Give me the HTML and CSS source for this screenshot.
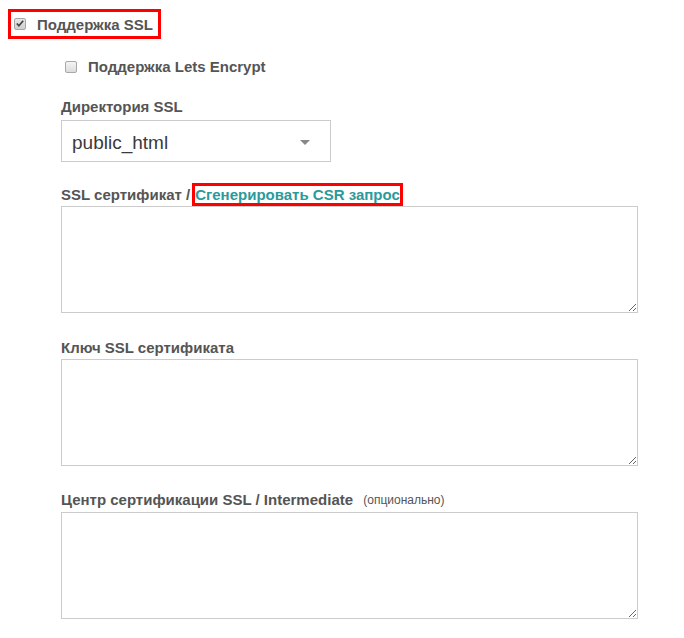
FILE: index.html
```html
<!DOCTYPE html>
<html>
<head>
<meta charset="utf-8">
<link rel="stylesheet" href="styles.css">
</head>
<body>
<div class="form">
  <div class="hl-box main-check">
    <span class="cb cb-checked"><svg width="11" height="11" viewBox="0 0 11 11"><path d="M2 5.5 L4.3 8 L9 2.5" fill="none" stroke="#444" stroke-width="1.9"/></svg></span>
    <span class="check-label">Поддержка SSL</span>
  </div>
  <div class="sub">
    <div class="le-row">
      <span class="cb"></span>
      <span class="check-label">Поддержка Lets Encrypt</span>
    </div>
    <div class="field field-dir">
      <div class="label">Директория SSL</div>
      <div class="select">
        <span class="select-value">public_html</span>
        <span class="caret"></span>
      </div>
    </div>
    <div class="field field-cert">
      <div class="label">SSL сертификат /<a class="link hl-link" href="#">Сгенерировать CSR запрос</a></div>
      <textarea class="ta"></textarea>
    </div>
    <div class="field field-key">
      <div class="label">Ключ SSL сертификата</div>
      <textarea class="ta"></textarea>
    </div>
    <div class="field field-ca">
      <div class="label">Центр сертификации SSL / Intermediate <span class="optional">(опционально)</span></div>
      <textarea class="ta"></textarea>
    </div>
  </div>
</div>
</body>
</html>
```
FILE: styles.css
```css
html, body {
  margin: 0;
  padding: 0;
  background: #fff;
}
body {
  font-family: "Liberation Sans", Arial, sans-serif;
  color: #555;
}
.form {
  padding: 9px 0 0 8px;
}
.hl-box {
  display: inline-flex;
  align-items: center;
  border: 3px solid #f00;
  height: 24px;
  padding: 0 5px 0 3px;
}
.cb {
  box-sizing: border-box;
  width: 12px;
  height: 12px;
  border: 1px solid #a8a8a8;
  border-radius: 2px;
  background: linear-gradient(#f4f4f4, #dcdcdc);
  display: inline-flex;
  align-items: center;
  justify-content: center;
  flex: none;
}
.cb svg {
  display: block;
}
.cb-checked {
  background: linear-gradient(#e6e6e6, #cfcfcf);
  margin-top: -1px;
}
.check-label {
  font-weight: bold;
  font-size: 15px;
}
.main-check .check-label {
  margin-left: 11px;
}
.sub {
  padding-left: 53px;
}
.le-row {
  display: flex;
  align-items: center;
  margin-top: 19px;
  padding-left: 4px;
}
.le-row .check-label {
  margin-left: 11px;
}
.label {
  display: flex;
  align-items: center;
  height: 20px;
  font-weight: bold;
  font-size: 15px;
  line-height: 20px;
  white-space: pre;
}
.field-dir {
  margin-top: 22px;
}
.field-dir .label {
  margin-bottom: 3px;
}
.field-cert {
  margin-top: 21px;
}
.field-cert .label {
  height: 23px;
  margin-bottom: 0;
}
.field-key {
  margin-top: 25px;
}
.field-key .label {
  margin-bottom: 1px;
}
.field-ca {
  margin-top: 24px;
}
.field-ca .label {
  margin-bottom: 2px;
}
.select {
  display: flex;
  align-items: center;
  justify-content: space-between;
  padding: 3px 20px 0 10px;
  box-sizing: border-box;
  width: 270px;
  height: 42px;
  border: 1px solid #ccc;
}
.select-value {
  font-size: 19px;
  color: #3a3a3a;
}
.caret {
  width: 0;
  height: 0;
  margin-top: -1px;
  border-left: 5px solid transparent;
  border-right: 5px solid transparent;
  border-top: 5px solid #888;
}
.link {
  color: #2a9a9c;
  text-decoration: none;
}
.hl-link {
  display: block;
  box-sizing: border-box;
  height: 23px;
  margin-left: 2px;
  border: 3px solid #f00;
  padding: 0;
  line-height: 17px;
}
.ta {
  display: block;
  width: 577px;
  height: 107px;
  box-sizing: border-box;
  border: 1px solid #ccc;
  margin: 0;
  font-family: inherit;
}
.optional {
  font-weight: normal;
  font-size: 12px;
  margin-left: 6px;
}
```
